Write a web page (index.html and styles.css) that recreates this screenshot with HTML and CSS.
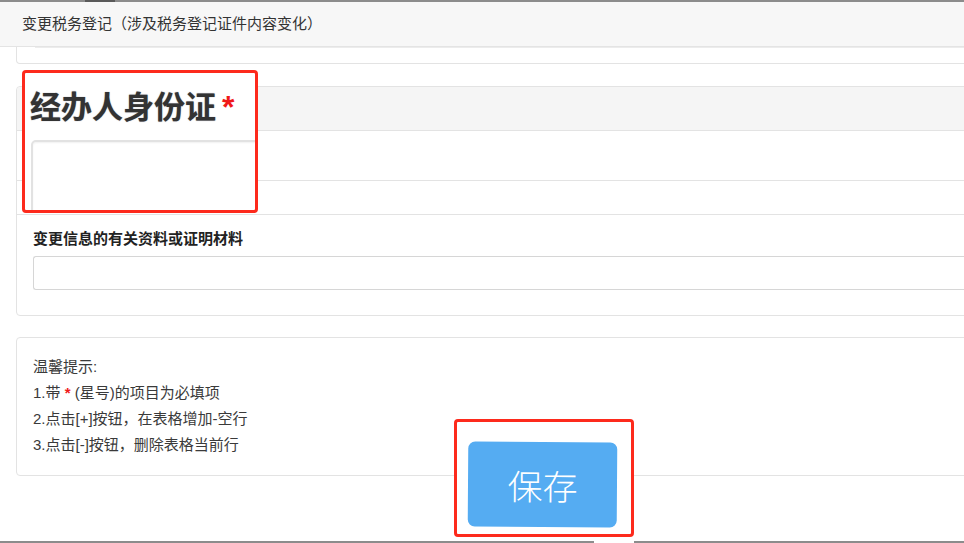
FILE: index.html
```html
<!DOCTYPE html>
<html lang="zh">
<head>
    <meta charset="UTF-8">
    <meta name="viewport" content="width=device-width, initial-scale=1.0">
    <title>变更税务登记</title>
    <link rel="stylesheet" href="styles.css">
</head>
<body>
    <div class="top-line"><span class="top-line-mark"></span></div>

    <div class="page-header">变更税务登记（涉及税务登记证件内容变化）</div>

    <div class="page">
        <!-- 上一块表单的底部 -->
        <div class="panel-stub">
            <div class="stub-input"></div>
        </div>

        <div class="panel">
            <div class="panel-heading"></div>
            <div class="panel-row row-tall"></div>
            <div class="panel-row row-short"></div>
            <div class="panel-section">
                <label class="field-label">变更信息的有关资料或证明材料</label>
                <div class="field-input"></div>
            </div>
        </div>

        <div class="panel tips">
            <p>温馨提示:</p>
            <p>1.带 <span class="req">*</span> (星号)的项目为必填项</p>
            <p>2.点击[+]按钮，在表格增加-空行</p>
            <p>3.点击[-]按钮，删除表格当前行</p>
        </div>
    </div>

    <div class="bottom-line">
        <span class="bottom-seg first"></span>
        <span class="bottom-gap"></span>
        <span class="bottom-seg rest"></span>
    </div>

    <!-- 标注：放大的字段 -->
    <div class="callout callout-field">
        <div class="callout-title">经办人身份证<span class="req">*</span></div>
        <div class="callout-input"></div>
    </div>

    <!-- 标注：保存按钮 -->
    <div class="callout callout-save">
        <button class="btn-save">保存</button>
    </div>
</body>
</html>
```

FILE: styles.css
```css
/* 变更税务登记页面 */
body {
    margin: 0;
    position: relative;
    height: 543px;
    overflow: hidden;
    background: #fff;
    color: #333;
    font-family: "Liberation Sans", "Noto Sans CJK SC", sans-serif;
    font-size: 15px;
}

.top-line {
    height: 2px;
    background: #8c8c8c;
    display: flex;
}

.top-line-mark {
    width: 30px;
    margin-left: 85px;
    background: #5a5a5a;
}

.page-header {
    height: 44px;
    line-height: 44px;
    padding-left: 22px;
    background: #f7f7f7;
    border-bottom: 1px solid #e4e4e4;
    color: #333;
    font-size: 15px;
}

.page {
    padding-left: 16px;
}

.panel-stub {
    height: 16px;
    margin-right: -20px;
    border: 1px solid #e3e3e3;
    border-top: none;
    border-radius: 0 0 4px 4px;
}

.stub-input {
    margin-left: 18px;
    border-top: 1px solid #ececec;
}

.panel {
    margin-top: 22px;
    margin-right: -20px;
    border: 1px solid #e3e3e3;
    border-radius: 4px;
}

.panel-heading {
    height: 43px;
    background: #f5f5f5;
    border-bottom: 1px solid #e3e3e3;
    border-radius: 4px 4px 0 0;
}

.panel-row {
    border-bottom: 1px solid #e3e3e3;
}

.row-tall {
    height: 49px;
}

.row-short {
    height: 33px;
}

.panel-section {
    padding: 14px 0 25px 16px;
}

.field-label {
    display: block;
    height: 20px;
    line-height: 20px;
    font-weight: bold;
    color: #222;
    font-size: 15px;
}

.field-input {
    margin-top: 7px;
    height: 32px;
    border: 1px solid #d6d6d6;
    border-right: none;
    border-radius: 3px 0 0 3px;
}

.tips {
    margin-top: 21px;
    padding: 16px 0 17px 16px;
}

.tips p {
    margin: 0;
    line-height: 26px;
    color: #3a3a3a;
}

.req {
    color: #f01919;
    font-weight: bold;
}

.bottom-line {
    position: absolute;
    left: 0;
    right: 0;
    bottom: 0;
    height: 2px;
    display: flex;
}

.bottom-seg {
    background: #8c8c8c;
}

.bottom-seg.first {
    width: 594px;
}

.bottom-gap {
    width: 40px;
}

.bottom-seg.rest {
    flex: 1;
}

/* 红框标注 */
.callout {
    position: absolute;
    box-sizing: border-box;
    border: 3px solid #fd2a1c;
    border-radius: 4px;
    background: #fff;
    overflow: hidden;
}

.callout-field {
    left: 22px;
    top: 70px;
    width: 236px;
    height: 143px;
    padding-left: 5px;
}

.callout-title {
    margin-top: 14px;
    height: 40px;
    line-height: 40px;
    font-size: 31px;
    font-weight: bold;
    color: #333;
    text-shadow: 0 0 1px rgba(40, 40, 60, 0.6);
    white-space: nowrap;
}

.callout-title .req {
    margin-left: 6px;
    font-size: 32px;
    text-shadow: none;
}

.callout-input {
    margin-top: 13px;
    margin-left: 1px;
    width: 280px;
    height: 80px;
    border: 2px solid #e2e2e2;
    border-radius: 5px;
    box-shadow: inset 0 1px 2px rgba(0, 0, 0, 0.06);
}

.callout-save {
    left: 454px;
    top: 419px;
    width: 180px;
    height: 118px;
    padding: 20px 0 0 11px;
}

.btn-save {
    display: block;
    width: 149px;
    height: 85px;
    border: none;
    border-radius: 7px;
    background: #55acf2;
    color: #fff;
    font-family: "Noto Sans CJK SC", sans-serif;
    font-size: 35px;
    font-weight: 300;
    padding: 0;
    transform: rotate(0.4deg);
}
```
